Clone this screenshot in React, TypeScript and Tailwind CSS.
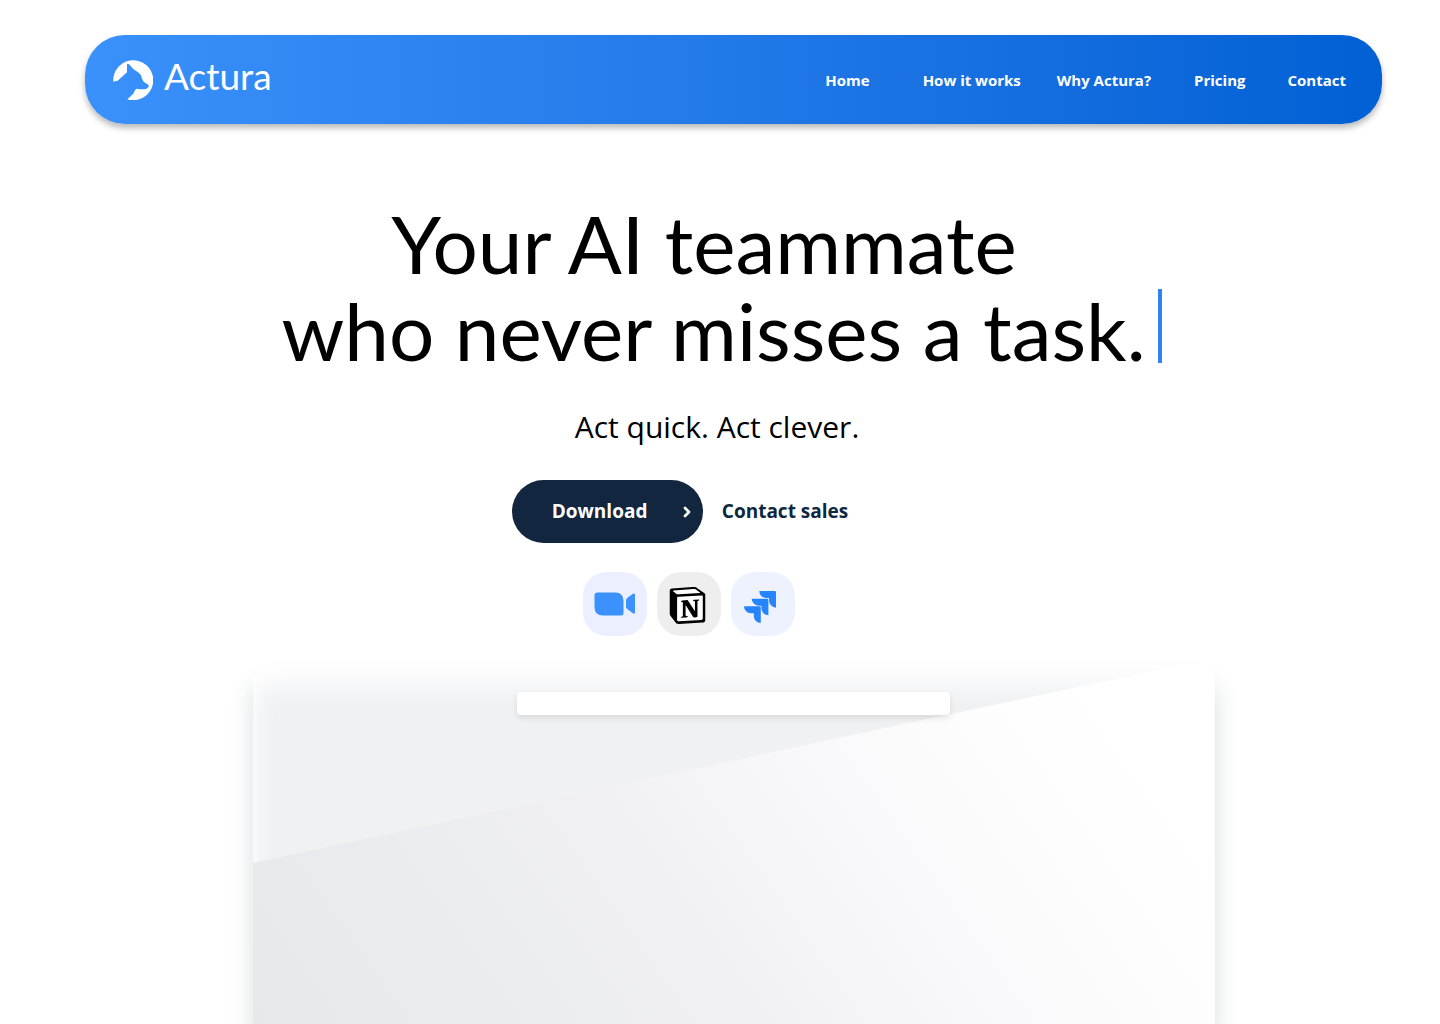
import { ChevronRight } from "lucide-react";
import { SiJira, SiNotion } from "react-icons/si";

const links = [
  { label: "Home", spacing: "mr-[53px]" },
  { label: "How it works", spacing: "mr-9" },
  { label: "Why Actura?", spacing: "mr-[43px]" },
  { label: "Pricing", spacing: "mr-[42px]" },
  { label: "Contact", spacing: "" },
];

function Logo() {
  return (
    <a href="#" className="flex items-center gap-[11px] text-white">
      <svg viewBox="0 0 120 120" className="size-10" fill="currentColor" aria-hidden="true">
        <path d="M1 65 L14 62 L42 37 V13 Q44 9 48 13 L61 27 L78 39 L84 46 Q88 62 94 67 L106 74 Q110 79 101 86 Q85 90 71 86 Q66 88 61 101 L43 118 A60 60 0 1 0 1 65Z" />
      </svg>
      <span className="pb-2 font-['Lato',sans-serif] text-[37px] leading-10">Actura</span>
    </a>
  );
}

function Header() {
  return (
    <header className="flex h-[89px] items-center justify-between rounded-[40px] bg-linear-to-r from-[#3a91fb] to-[#0060d4] pr-9 pl-7 shadow-[0_4px_6px_rgba(0,0,0,0.28)]">
      <Logo />
      <nav className="flex pt-0.5 font-['Open_Sans',sans-serif] text-[15px] font-bold text-white">
        {links.map((l) => (
          <a key={l.label} href="#" className={l.spacing}>
            {l.label}
          </a>
        ))}
      </nav>
    </header>
  );
}

function Integrations() {
  return (
    <ul className="mt-[29px] mr-[89px] flex gap-[10px]">
      <li className="flex size-16 items-center justify-center rounded-3xl bg-[#ebefff]">
        <svg viewBox="0 0 42 24" className="h-6 w-[42px]" fill="#3b92ff" role="img" aria-label="Zoom">
          <path d="M3.500 .5H21Q29.500 .5 29.500 9V21Q29.500 23.500 27 23.500H9Q.5 23.500 .5 15V3.500Q.5 .5 3.500 .5Z" />
          <path d="M32 8.500Q32 7 33.200 6L38.500 2Q41 .5 41 3V20Q41 23 38.500 21L33.200 17Q32 16 32 14.500Z" />
        </svg>
      </li>
      <li className="flex size-16 items-center justify-center rounded-3xl bg-[#eeeeee] pt-0.5 pr-[3px]">
        <svg viewBox="0 0 24 24" className="size-[37px]" role="img" aria-label="Notion">
          <path fill="#fff" d="M2 2 L17 1 L22.500 5 V21 L6.500 22.500 L2 17Z" />
          <SiNotion size={24} color="#000" />
        </svg>
      </li>
      <li className="flex size-16 items-center justify-center rounded-3xl bg-[#eef2ff] pt-1.5 pr-1.5">
        <SiJira size={32} color="#2684ff" title="Jira" />
      </li>
    </ul>
  );
}

function Preview() {
  return (
    <section
      aria-label="Preview"
      className="relative mt-7 flex min-h-[360px] w-full max-w-[962px] flex-1 justify-center rounded-t-xl bg-[#f0f1f3] shadow-[0_20px_24px_rgba(30,50,70,0.16)]"
    >
      <div className="absolute inset-0 rounded-t-xl shadow-[inset_0_20px_28px_#ffffff,inset_4px_0_20px_rgba(255,255,255,0.3)]" />
      <div className="absolute inset-0 rounded-tr-xl bg-[linear-gradient(55deg,#e7e8ec_0%,#e9eaee_12%,#f0f0f3_40%,#f8f8fa_60%,#fdfdfd_78%,#ffffff_92%)] [clip-path:polygon(0_199px,97%_0,100%_0,100%_100%,0_100%)]" />
      <div className="relative mt-7 h-[23px] w-[45%] rounded bg-white shadow-[0_3px_6px_rgba(0,0,0,0.1)]" />
    </section>
  );
}

export default function App() {
  return (
    <div className="flex min-h-screen flex-col overflow-hidden bg-white pt-[35px] pr-[58px] pl-[85px] text-black">
      <Header />
      <main className="flex flex-1 flex-col items-center">
        <h1 className="mt-[76px] flex flex-col items-center font-['Lato',sans-serif] text-[80px] leading-[87px]">
          <span className="mr-[59px]">Your AI teammate</span>
          <span className="mr-6 flex items-start gap-3">
            who never misses a task.
            <span className="mt-0.5 h-[74px] w-1 bg-[#2f86ee]" />
          </span>
        </h1>
        <p className="mt-[33px] mr-[33px] font-['Open_Sans',sans-serif] text-[30px] leading-10">
          Act quick. Act clever.
        </p>
        <div className="mt-[33px] mr-[107px] flex items-center gap-[19px] font-['Open_Sans',sans-serif] text-[19px] font-bold">
          <button className="flex h-[63px] w-[191px] items-center justify-between rounded-full bg-[#12263f] pr-2 pl-10 text-white">
            Download
            <ChevronRight size={16} strokeWidth={4} />
          </button>
          <a href="#" className="text-[#0d2740]">
            Contact sales
          </a>
        </div>
        <Integrations />
        <Preview />
      </main>
    </div>
  );
}
